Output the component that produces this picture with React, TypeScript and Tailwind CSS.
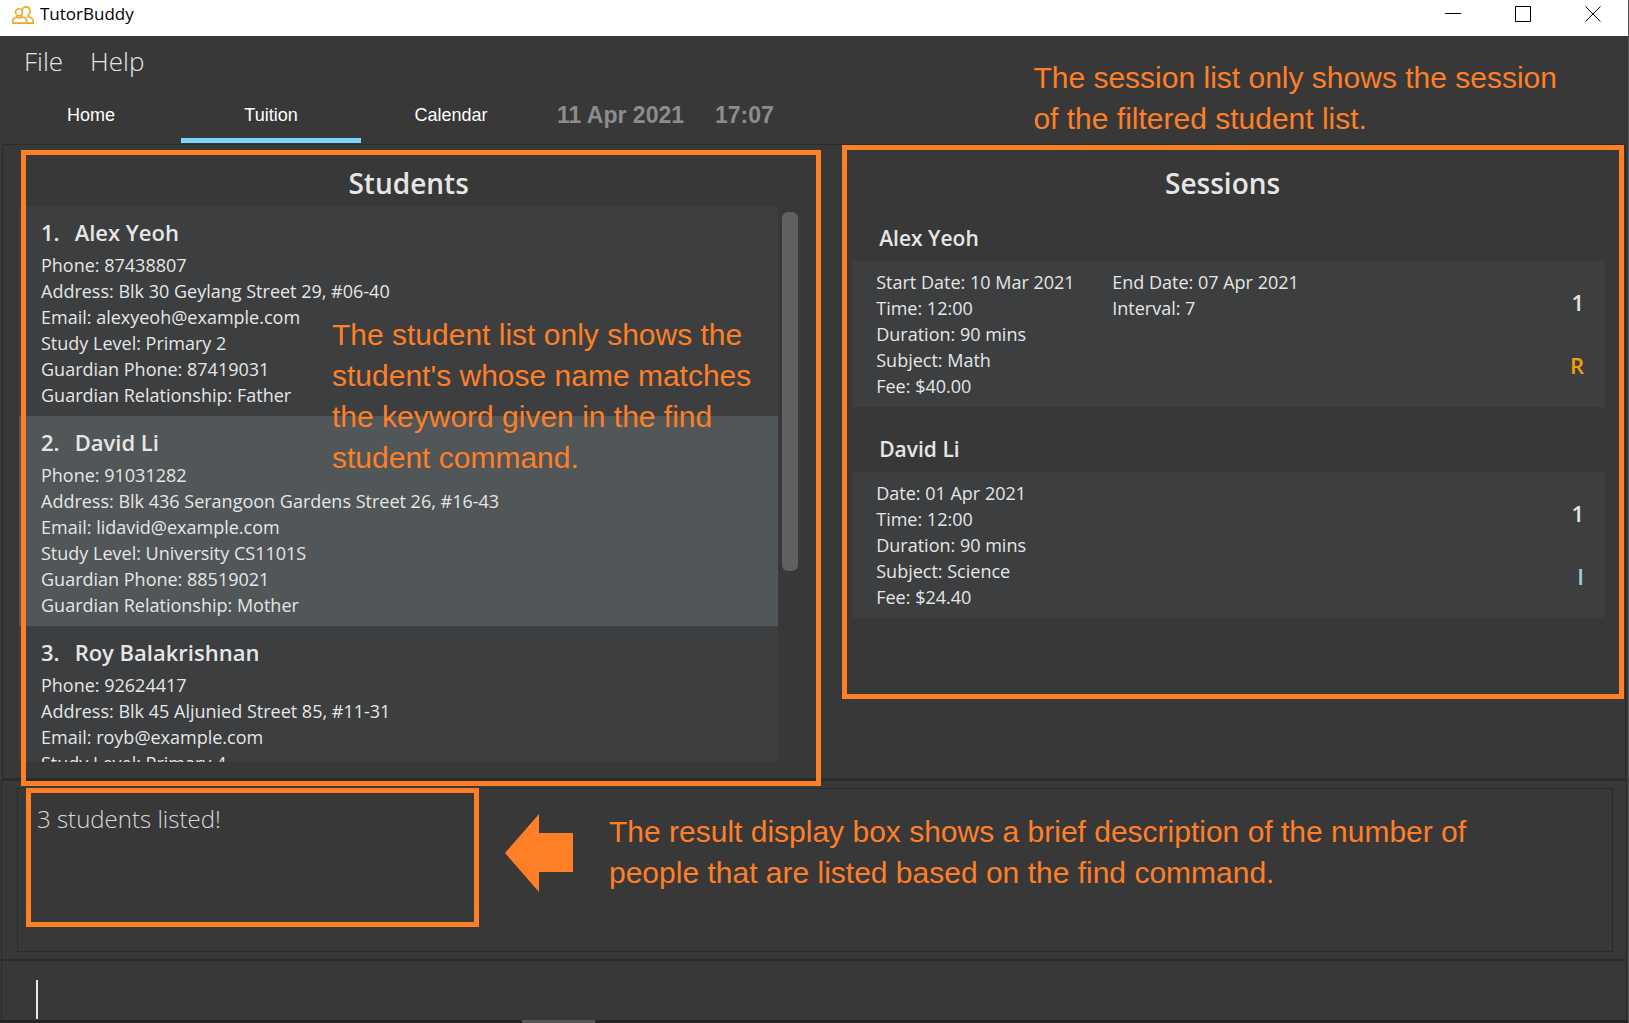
import type { ReactNode } from "react";

const students = [
  {
    name: "Alex Yeoh",
    selected: false,
    lines: [
      "Phone: 87438807",
      "Address: Blk 30 Geylang Street 29, #06-40",
      "Email: alexyeoh@example.com",
      "Study Level: Primary 2",
      "Guardian Phone: 87419031",
      "Guardian Relationship: Father",
    ],
  },
  {
    name: "David Li",
    selected: true,
    lines: [
      "Phone: 91031282",
      "Address: Blk 436 Serangoon Gardens Street 26, #16-43",
      "Email: lidavid@example.com",
      "Study Level: University CS1101S",
      "Guardian Phone: 88519021",
      "Guardian Relationship: Mother",
    ],
  },
  {
    name: "Roy Balakrishnan",
    selected: false,
    lines: [
      "Phone: 92624417",
      "Address: Blk 45 Aljunied Street 85, #11-31",
      "Email: royb@example.com",
      "Study Level: Primary 4",
    ],
  },
];

const sessions = [
  {
    name: "Alex Yeoh",
    left: ["Start Date: 10 Mar 2021", "Time: 12:00", "Duration: 90 mins", "Subject: Math", "Fee: $40.00"],
    right: ["End Date: 07 Apr 2021", "Interval: 7"],
    kind: "R",
    kindClass: "text-[#f0a00c]",
  },
  {
    name: "David Li",
    left: ["Date: 01 Apr 2021", "Time: 12:00", "Duration: 90 mins", "Subject: Science", "Fee: $24.40"],
    right: [],
    kind: "I",
    kindClass: "text-[#a3cddd]",
  },
];

function Logo() {
  return (
    <svg viewBox="0 0 22 18" className="mt-px h-[18px] w-[22px]" fill="none" stroke="#eba92c" strokeWidth="1.6" aria-hidden="true">
      <path d="M10.2 5.2C10 2.600 11.700 .9 14 .9s4 1.800 4 4.300c0 1.900-.9 3.400-2 4.100v1.400l3.200 1.200c1.300.5 2 1.500 2 3v2.200h-6.400" />
      <circle cx="7" cy="6.200" r="3.500" />
      <path d="M5.200 9.300v1.800l-2.800 1c-1 .4-1.600 1.300-1.600 2.600v2.400h14v-2.400c0-1.300-.6-2.200-1.600-2.600l-3.400-1.100V9.300M5.200 11.100c1.200 1 3 1 4.200 0M9 9.300v1.800" />
    </svg>
  );
}

function Note({ lines, className }: { lines: string[]; className: string }) {
  return (
    <p className={`font-['Liberation_Sans',sans-serif] text-[30px] leading-[41px] whitespace-nowrap text-[#ff7f27] ${className}`}>
      {lines.map((line) => (
        <span key={line} className="block">
          {line}
        </span>
      ))}
    </p>
  );
}

function Frame({ className }: { className: string }) {
  return <div aria-hidden="true" className={`pointer-events-none absolute z-10 border-[5px] border-[#ff7f27] ${className}`} />;
}

function Tab({ label, active = false }: { label: string; active?: boolean }) {
  return (
    <button
      type="button"
      role="tab"
      aria-selected={active}
      className={`flex h-[51px] w-[180px] items-center justify-center border-b-[5px] text-lg text-white ${
        active ? "border-[#7fd4f8]" : "border-transparent"
      }`}
    >
      {label}
    </button>
  );
}

function PanelTitle({ children }: { children: ReactNode }) {
  return <h2 className="text-center text-[28px] leading-9 font-semibold">{children}</h2>;
}

export default function App() {
  return (
    <div className="flex h-screen flex-col overflow-hidden border-r border-[#555] bg-[#383838] font-['Open_Sans','Noto_Sans',sans-serif] text-[#e6e6e6]">
      <header className="flex h-9 shrink-0 items-center justify-between bg-white pb-2 pl-3 text-black">
        <div className="flex items-center gap-1.5">
          <Logo />
          <h1 className="text-[17px] leading-6">TutorBuddy</h1>
        </div>
        <div className="flex gap-[38px] pr-[19px]">
          <button type="button" aria-label="Minimize" className="flex w-8 justify-center">
            <svg viewBox="0 0 16 16" className="size-4" stroke="black" fill="none">
              <path d="M0 7.500h16" />
            </svg>
          </button>
          <button type="button" aria-label="Maximize" className="flex w-8 justify-center">
            <svg viewBox="0 0 16 16" className="size-4" stroke="black" fill="none">
              <path d="M.5.500h15v15H.5z" />
            </svg>
          </button>
          <button type="button" aria-label="Close" className="flex w-8 justify-center">
            <svg viewBox="0 0 16 16" className="size-4" stroke="black" fill="none">
              <path d="M.5.500l15 15M15.500.500l-15 15" />
            </svg>
          </button>
        </div>
      </header>

      <div className="relative shrink-0">
        <nav className="flex h-14 items-center gap-[27px] pb-1.5 pl-6 text-[26px] font-light">
          <button type="button">File</button>
          <button type="button">Help</button>
        </nav>
        <div className="flex pb-px font-['Liberation_Sans',sans-serif]">
          <div role="tablist" className="flex pl-px">
            <Tab label="Home" />
            <Tab label="Tuition" active />
            <Tab label="Calendar" />
          </div>
          <div className="flex h-[46px] items-center gap-[31px] pl-4 text-[23px] font-bold text-[#8c8c8c]">
            <span>11 Apr 2021</span>
            <span>17:07</span>
          </div>
        </div>
        <Note className="absolute top-[21px] right-[71px]" lines={["The session list only shows the session", "of the filtered student list."]} />
      </div>

      <main className="mx-0.5 grid min-h-0 flex-1 grid-cols-[51%_49%] border border-b-2 border-[#2b2b2b]">
        <section className="relative flex min-h-0 flex-col pt-5 pr-8 pb-4 pl-4">
          <PanelTitle>Students</PanelTitle>
          <div className="mt-[5px] flex min-h-0 flex-1 gap-1">
            <ol className="min-h-0 flex-1 overflow-hidden">
              {students.map((student, index) => (
                <li
                  key={student.name}
                  className={`h-[210px] pt-2.5 pl-[22px] text-lg leading-[26px] ${student.selected ? "bg-[#515658]" : "bg-[#3c3e3f]"}`}
                >
                  <h3 className="mb-1 flex gap-[15px] text-[22px] leading-8 font-semibold">
                    <span>{index + 1}.</span>
                    <span>{student.name}</span>
                  </h3>
                  {student.lines.map((line) => (
                    <p key={line}>{line}</p>
                  ))}
                </li>
              ))}
            </ol>
            <div className="w-4 py-1.5">
              <div className="h-[66%] rounded-md bg-[#606060]" />
            </div>
          </div>
          <Frame className="top-[5px] right-[9px] -bottom-2 left-[18px]" />
          <Note
            className="absolute top-[169px] left-[329px] z-10"
            lines={["The student list only shows the", "student's whose name matches", "the keyword given in the find", "student command."]}
          />
        </section>

        <section className="relative min-h-0 pt-5 pr-5 pl-[22px]">
          <div className="pr-3">
            <PanelTitle>Sessions</PanelTitle>
          </div>
          <div className="mt-3.5 flex flex-col gap-[19px]">
            {sessions.map((session) => (
              <article key={session.name}>
                <h3 className="pl-[27px] text-[21px] leading-[46px] font-semibold">{session.name}</h3>
                <div className="flex h-[146px] bg-[#3c3e3f] pt-2 pr-[21px] pl-6 text-lg leading-[26px]">
                  <div className="w-[236px]">
                    {session.left.map((line) => (
                      <p key={line}>{line}</p>
                    ))}
                  </div>
                  <div className="flex-1">
                    {session.right.map((line) => (
                      <p key={line}>{line}</p>
                    ))}
                  </div>
                  <div className="flex flex-col items-end gap-[31px] pt-[17px] text-[22px] leading-8 font-semibold">
                    <span>1</span>
                    <span className={session.kindClass}>{session.kind}</span>
                  </div>
                </div>
              </article>
            ))}
          </div>
          <Frame className="top-0 right-px bottom-[79px] left-3" />
        </section>
      </main>

      <section aria-label="Result" className="mx-px shrink-0 border border-b-2 border-[#2b2b2b] pt-[7px] pr-[13px] pb-[7px] pl-[15px]">
        <div className="relative h-[164px] border border-[#2b2b2b] px-[19px] py-3">
          <output className="text-2xl leading-9 font-light text-[#d8d8d8]">3 students listed!</output>
          <Frame className="-top-px left-2 h-[139px] w-[453px]" />
          <svg viewBox="0 0 68 78" className="absolute top-[25px] left-[487px] h-[78px] w-[68px]" fill="#ff7f27" aria-hidden="true">
            <path d="M0 39L34 0v19h34v39H34v20z" />
          </svg>
          <Note
            className="absolute top-[22px] left-[591px]"
            lines={["The result display box shows a brief description of the number of", "people that are listed based on the find command."]}
          />
        </div>
      </section>

      <div className="relative mx-px h-[59px] shrink-0 border-x border-[#2b2b2b]">
        <input aria-label="Command" type="text" className="h-full w-full bg-transparent px-9 text-2xl caret-transparent outline-none" />
        <span aria-hidden="true" className="absolute top-[19px] left-[34px] h-[39px] w-0.5 bg-[#e8e8e8]" />
      </div>
      <div className="h-[3px] shrink-0 bg-[#262424] pl-[522px]">
        <div className="h-full w-[73px] bg-[#565454]" />
      </div>
    </div>
  );
}
